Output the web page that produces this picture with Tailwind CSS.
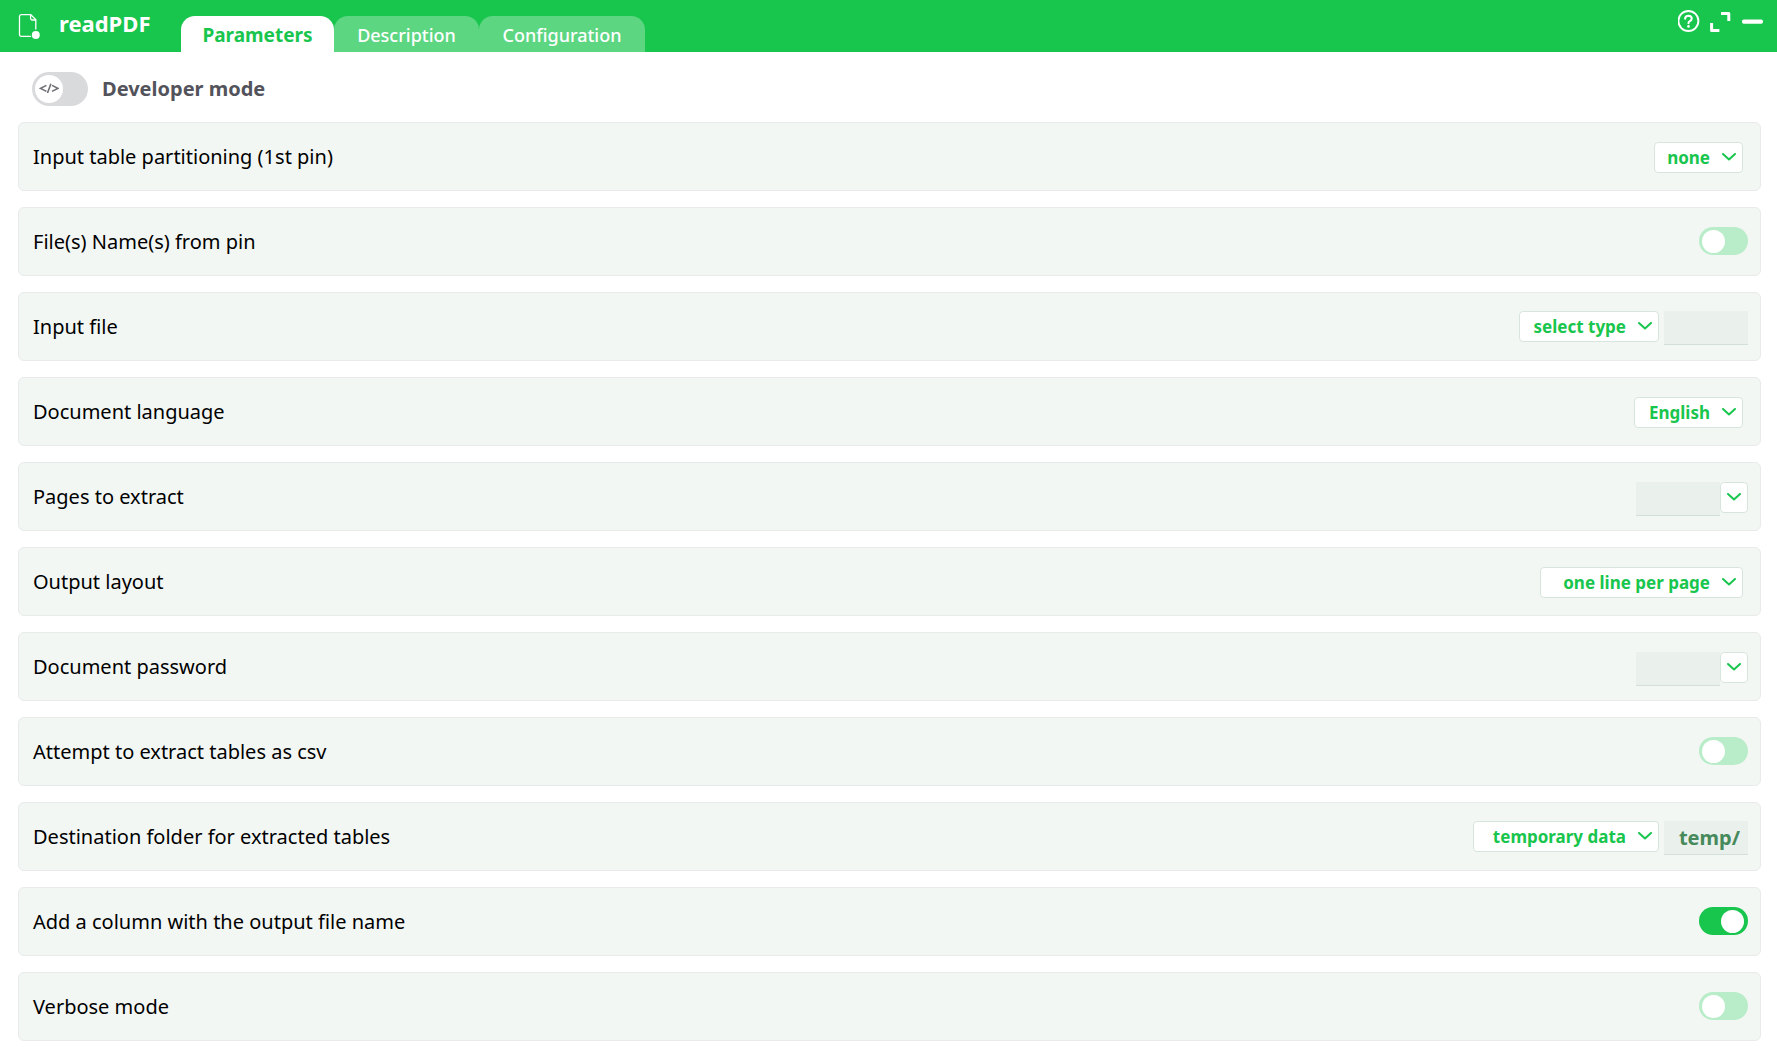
<!doctype html>
<html lang="en">
<head>
  <meta charset="UTF-8" />
  <meta name="viewport" content="width=device-width, initial-scale=1.0" />
  <script src="https://cdn.jsdelivr.net/npm/@tailwindcss/browser@4"></script>
  <title>readPDF | Parameters</title>
</head>
<body class="bg-white text-black font-['Noto_Sans',sans-serif]">

  <!-- Shared icons -->
  <svg class="hidden">
    <symbol id="chevron" viewBox="0 0 14 8">
      <path d="M1 1l6 5.4L13 1" fill="none" stroke="currentColor" stroke-width="2" stroke-linecap="round" stroke-linejoin="round" />
    </symbol>
  </svg>

  <!-- Header -->
  <header class="flex h-[52px] bg-[#18c54d] text-white">
    <div class="flex items-start pl-[18px] pt-[13px]">
      <svg class="w-[24px] h-[28px]" viewBox="0 0 24 28" fill="none" stroke="currentColor" stroke-width="1.3" stroke-linejoin="round" stroke-linecap="round">
        <path d="M12.5 23.4H3.2Q1.5 23.4 1.5 21.5V3.5Q1.5 1.6 3.2 1.6H12.8L17.8 6.8V16" />
        <path d="M12.6 1.8V5.6Q12.6 7 14 7H17.6" />
        <circle cx="17.8" cy="22" r="4" fill="currentColor" stroke="none" />
      </svg>
    </div>
    <h1 class="w-[122px] ml-[17px] mt-2 text-[22px] leading-[30px] font-bold">readPDF</h1>
    <nav class="flex items-end">
      <button type="button" class="w-[153px] h-9 pt-px rounded-t-[14px] bg-white text-[#18c54d] text-[19px] leading-9 font-bold">Parameters</button>
      <button type="button" class="w-[145px] h-9 pt-px rounded-t-[14px] bg-white/30 text-[18px] leading-9 font-medium">Description</button>
      <button type="button" class="w-[166px] h-9 pt-px rounded-t-[14px] bg-white/30 text-[18px] leading-9 font-medium">Configuration</button>
    </nav>
    <div class="flex items-start gap-[10px] ml-auto mr-[14px] pt-[10px]">
      <button type="button" aria-label="Help">
        <svg class="w-[22px] h-[22px]" viewBox="0 0 22 22" fill="none" stroke="currentColor" stroke-linecap="round">
          <circle cx="10.4" cy="11" r="10" stroke-width="1.9" />
          <path d="M7.1 8.6Q7.3 5.7 10.4 5.7Q13.7 5.8 13.7 8.5Q13.7 10.2 11.8 11.1Q10.5 11.8 10.5 13.2" stroke-width="2.1" />
          <circle cx="10.5" cy="16.4" r="1.3" fill="currentColor" stroke="none" />
        </svg>
      </button>
      <button type="button" aria-label="Expand">
        <svg class="w-[22px] h-[22px]" viewBox="0 0 22 22" fill="none" stroke="currentColor" stroke-width="3" stroke-linejoin="round">
          <path d="M11 3.5H18.8V11" />
          <path d="M1.6 13V20.5H9.4" />
        </svg>
      </button>
      <button type="button" aria-label="Minimize">
        <svg class="w-[21px] h-[22px]" viewBox="0 0 21 22">
          <rect y="9.5" width="21" height="4.2" rx="1.8" fill="currentColor" />
        </svg>
      </button>
    </div>
  </header>

  <main class="pl-[18px] pr-4">
    <!-- Developer mode -->
    <div class="flex items-center h-[70px] pl-[14px] pt-1">
      <label class="relative flex items-center w-14 h-[34px] p-[3px] rounded-full bg-[#d9dadc]">
        <input type="checkbox" id="devMode" class="peer absolute inset-0 appearance-none">
        <span class="flex items-center justify-center w-7 h-7 rounded-full bg-white text-[#6f6f75] peer-checked:translate-x-[22px]">
          <svg class="w-5 h-3" viewBox="0 0 20 12" fill="none" stroke="currentColor" stroke-width="1.6">
            <path d="M7.4 2.4L1.6 5.4L7.4 8.4" />
            <path d="M11.9 .8L8.5 10" />
            <path d="M13 2.4L18.8 5.4L13 8.4" />
          </svg>
        </span>
      </label>
      <label for="devMode" class="ml-[14px] text-[20px] leading-7 font-bold text-[#53535b]">Developer mode</label>
    </div>

    <!-- Parameters -->
    <form class="flex flex-col gap-4 pb-3">
      <div class="flex justify-between h-[69px] pl-[14px] pr-3 border border-[#e8ebe9] rounded-md bg-[#f3f7f4]">
        <label for="partitioning" class="text-[20px] leading-[67px]">Input table partitioning (1st pin)</label>
        <div class="relative mt-[19px] mr-[5px] h-[31px]">
          <select id="partitioning" class="appearance-none w-[89px] h-[31px] pr-8 border border-[#d8e5dc] rounded-[4px] bg-white text-[#18c54d] text-[17px] font-bold [text-align-last:right]">
            <option>none</option>
          </select>
          <svg class="absolute right-[7px] top-[11px] w-[14px] h-2 text-[#18c54d] pointer-events-none"><use href="#chevron" /></svg>
        </div>
      </div>

      <div class="flex justify-between h-[69px] pl-[14px] pr-3 border border-[#e8ebe9] rounded-md bg-[#f3f7f4]">
        <label for="fileFromPin" class="text-[20px] leading-[67px]">File(s) Name(s) from pin</label>
        <input type="checkbox" id="fileFromPin" class="appearance-none w-[49px] h-7 mt-[19px] p-[3px] rounded-full bg-[#b9edc9] checked:bg-[#18c54d] before:block before:w-[23px] before:h-[23px] before:rounded-full before:bg-white checked:before:ml-[19px]">
      </div>

      <div class="flex justify-between h-[69px] pl-[14px] pr-3 border border-[#e8ebe9] rounded-md bg-[#f3f7f4]">
        <label for="inputFile" class="text-[20px] leading-[67px]">Input file</label>
        <div class="flex gap-[5px] mt-[18px]">
          <div class="relative h-[31px]">
            <select aria-label="Input file type" class="appearance-none w-[140px] h-[31px] pr-8 border border-[#d8e5dc] rounded-[4px] bg-white text-[#18c54d] text-[17px] font-bold [text-align-last:right]">
              <option>select type</option>
            </select>
            <svg class="absolute right-[7px] top-[11px] w-[14px] h-2 text-[#18c54d] pointer-events-none"><use href="#chevron" /></svg>
          </div>
          <input type="text" id="inputFile" class="w-[84px] h-[34px] px-2 border-b border-[#d3e0d8] bg-[#eaf0ec] text-[#468a5b] text-[20px] font-bold text-right">
        </div>
      </div>

      <div class="flex justify-between h-[69px] pl-[14px] pr-3 border border-[#e8ebe9] rounded-md bg-[#f3f7f4]">
        <label for="language" class="text-[20px] leading-[67px]">Document language</label>
        <div class="relative mt-[19px] mr-[5px] h-[31px]">
          <select id="language" class="appearance-none w-[109px] h-[31px] pr-8 border border-[#d8e5dc] rounded-[4px] bg-white text-[#18c54d] text-[17px] font-bold [text-align-last:right]">
            <option>English</option>
          </select>
          <svg class="absolute right-[7px] top-[11px] w-[14px] h-2 text-[#18c54d] pointer-events-none"><use href="#chevron" /></svg>
        </div>
      </div>

      <div class="flex justify-between h-[69px] pl-[14px] pr-3 border border-[#e8ebe9] rounded-md bg-[#f3f7f4]">
        <label for="pages" class="text-[20px] leading-[67px]">Pages to extract</label>
        <div class="flex mt-[19px]">
          <input type="text" id="pages" class="w-[84px] h-[34px] px-2 border-b border-[#d3e0d8] bg-[#eaf0ec] text-[#468a5b] text-[20px] font-bold text-right">
          <div class="relative h-[31px]">
            <select aria-label="Pages presets" class="appearance-none w-7 h-[31px] border border-[#d8e5dc] rounded-[4px] bg-white"></select>
            <svg class="absolute right-[7px] top-[11px] w-[14px] h-2 text-[#18c54d] pointer-events-none"><use href="#chevron" /></svg>
          </div>
        </div>
      </div>

      <div class="flex justify-between h-[69px] pl-[14px] pr-3 border border-[#e8ebe9] rounded-md bg-[#f3f7f4]">
        <label for="layout" class="text-[20px] leading-[67px]">Output layout</label>
        <div class="relative mt-[19px] mr-[5px] h-[31px]">
          <select id="layout" class="appearance-none w-[203px] h-[31px] pr-8 border border-[#d8e5dc] rounded-[4px] bg-white text-[#18c54d] text-[17px] font-bold [text-align-last:right]">
            <option>one line per page</option>
          </select>
          <svg class="absolute right-[7px] top-[11px] w-[14px] h-2 text-[#18c54d] pointer-events-none"><use href="#chevron" /></svg>
        </div>
      </div>

      <div class="flex justify-between h-[69px] pl-[14px] pr-3 border border-[#e8ebe9] rounded-md bg-[#f3f7f4]">
        <label for="docPassword" class="text-[20px] leading-[67px]">Document password</label>
        <div class="flex mt-[19px]">
          <input type="text" id="docPassword" class="w-[84px] h-[34px] px-2 border-b border-[#d3e0d8] bg-[#eaf0ec] text-[#468a5b] text-[20px] font-bold text-right">
          <div class="relative h-[31px]">
            <select aria-label="Password presets" class="appearance-none w-7 h-[31px] border border-[#d8e5dc] rounded-[4px] bg-white"></select>
            <svg class="absolute right-[7px] top-[11px] w-[14px] h-2 text-[#18c54d] pointer-events-none"><use href="#chevron" /></svg>
          </div>
        </div>
      </div>

      <div class="flex justify-between h-[69px] pl-[14px] pr-3 border border-[#e8ebe9] rounded-md bg-[#f3f7f4]">
        <label for="extractCsv" class="text-[20px] leading-[67px]">Attempt to extract tables as csv</label>
        <input type="checkbox" id="extractCsv" class="appearance-none w-[49px] h-7 mt-[19px] p-[3px] rounded-full bg-[#b9edc9] checked:bg-[#18c54d] before:block before:w-[23px] before:h-[23px] before:rounded-full before:bg-white checked:before:ml-[19px]">
      </div>

      <div class="flex justify-between h-[69px] pl-[14px] pr-3 border border-[#e8ebe9] rounded-md bg-[#f3f7f4]">
        <label for="destFolder" class="text-[20px] leading-[67px]">Destination folder for extracted tables</label>
        <div class="flex gap-[5px] mt-[18px]">
          <div class="relative h-[31px]">
            <select aria-label="Destination type" class="appearance-none w-[186px] h-[31px] pr-8 border border-[#d8e5dc] rounded-[4px] bg-white text-[#18c54d] text-[17px] font-bold [text-align-last:right]">
              <option>temporary data</option>
            </select>
            <svg class="absolute right-[7px] top-[11px] w-[14px] h-2 text-[#18c54d] pointer-events-none"><use href="#chevron" /></svg>
          </div>
          <input type="text" id="destFolder" value="temp/" class="w-[84px] h-[34px] px-2 border-b border-[#d3e0d8] bg-[#eaf0ec] text-[#468a5b] text-[20px] font-bold text-right">
        </div>
      </div>

      <div class="flex justify-between h-[69px] pl-[14px] pr-3 border border-[#e8ebe9] rounded-md bg-[#f3f7f4]">
        <label for="addColumn" class="text-[20px] leading-[67px]">Add a column with the output file name</label>
        <input type="checkbox" id="addColumn" checked class="appearance-none w-[49px] h-7 mt-[19px] p-[3px] rounded-full bg-[#b9edc9] checked:bg-[#18c54d] before:block before:w-[23px] before:h-[23px] before:rounded-full before:bg-white checked:before:ml-[19px]">
      </div>

      <div class="flex justify-between h-[69px] pl-[14px] pr-3 border border-[#e8ebe9] rounded-md bg-[#f3f7f4]">
        <label for="verbose" class="text-[20px] leading-[67px]">Verbose mode</label>
        <input type="checkbox" id="verbose" class="appearance-none w-[49px] h-7 mt-[19px] p-[3px] rounded-full bg-[#b9edc9] checked:bg-[#18c54d] before:block before:w-[23px] before:h-[23px] before:rounded-full before:bg-white checked:before:ml-[19px]">
      </div>
    </form>
  </main>

</body>
</html>
